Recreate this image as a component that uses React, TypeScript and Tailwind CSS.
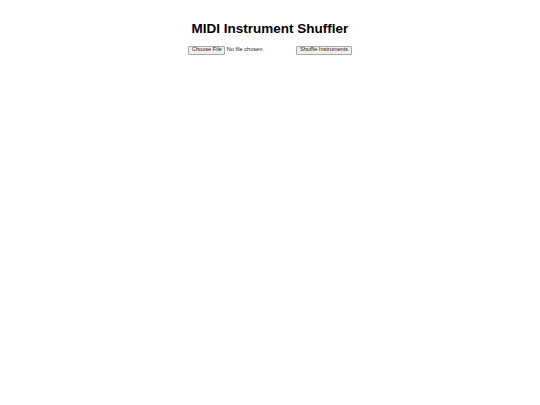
export default function App() {
  const btn =
    'h-[8.5px] px-[2.5px] flex items-center rounded-[1px] border-[0.5px] border-[#a8a8a8] bg-[#efefef] text-[5.6px] leading-none text-[#222]';

  return (
    <div className="min-h-[405px] w-[540px] bg-white font-['Liberation_Sans',Arial,sans-serif]">
      <div className="flex flex-col items-center pt-[21px]">
        <h1 className="text-[13.5px] leading-[15.5px] font-bold text-black">MIDI Instrument Shuffler</h1>
        <div className="mt-[9.5px] flex items-center">
          <div className="flex w-[108px] items-center">
            <div className={btn}>Choose File</div>
            <span className="ml-[1.5px] text-[5.6px] leading-none text-[#222]">No file chosen</span>
          </div>
          <div className={btn}>Shuffle Instruments</div>
        </div>
      </div>
    </div>
  );
}
